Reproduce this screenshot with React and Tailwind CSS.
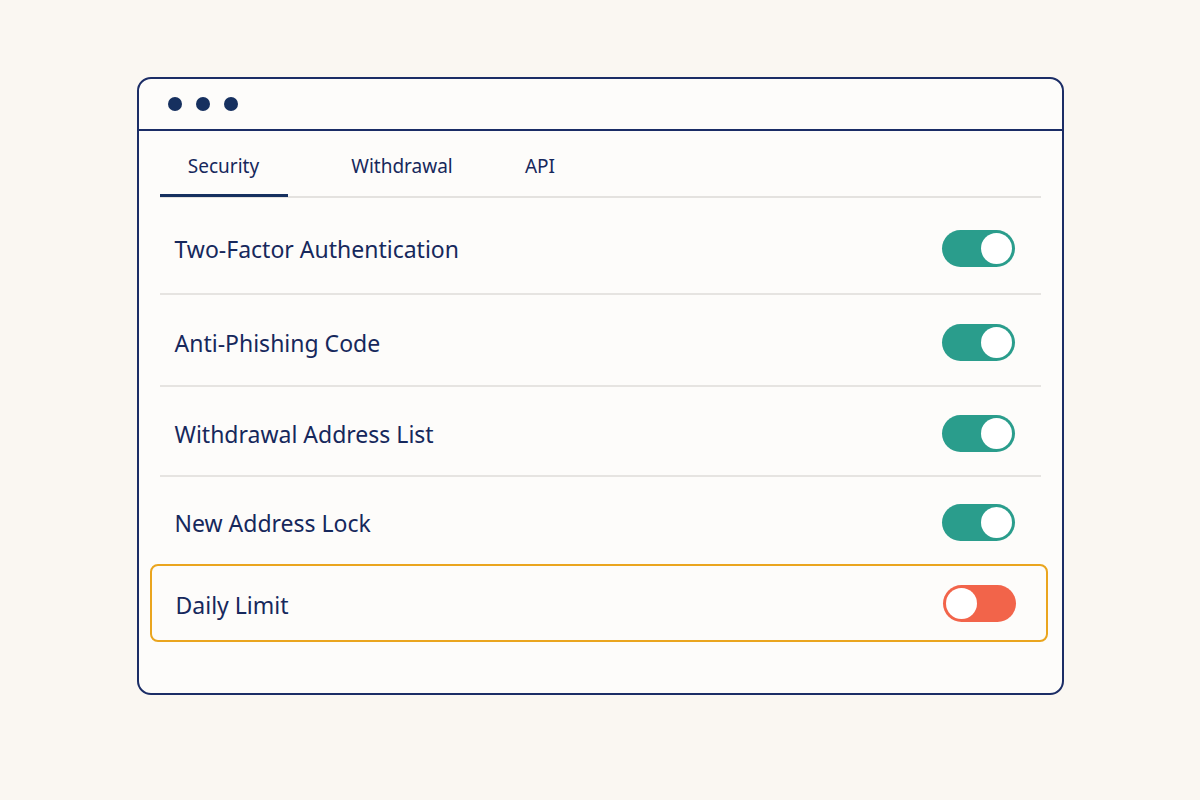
import React, { useState } from 'react';

const tabs = ['Security', 'Withdrawal', 'API'];

const settings = [
  { label: 'Two-Factor Authentication', on: true, height: 'h-[97px]' },
  { label: 'Anti-Phishing Code', on: true, height: 'h-[92px]' },
  { label: 'Withdrawal Address List', on: true, height: 'h-[90px]' },
  { label: 'New Address Lock', on: true, height: 'h-[86px]' },
];

const Toggle = ({ on, onClick }) => (
  <button
    onClick={onClick}
    className={`flex h-[37px] w-[73px] items-center rounded-full p-[3px] ${
      on ? 'justify-end bg-[#2a9d8c]' : 'justify-start bg-[#f2644a]'
    }`}
  >
    <span className="block h-[31px] w-[31px] rounded-full bg-white" />
  </button>
);

export default function App() {
  const [active, setActive] = useState('Security');
  const [values, setValues] = useState(settings.map((s) => s.on));
  const [dailyLimit, setDailyLimit] = useState(false);

  const flip = (i) => setValues((v) => v.map((x, j) => (j === i ? !x : x)));

  return (
    <div
      className="flex h-[800px] w-full items-start justify-center bg-[#faf7f2] pt-[77px] text-[#16285c]"
      style={{ fontFamily: '"Noto Sans", "Open Sans", sans-serif' }}
    >
      <div className="h-[618px] w-[927px] rounded-[14px] border-2 border-[#1b2d66] bg-[#fdfcfa]">
        {/* title bar */}
        <div className="flex h-[52px] items-center gap-[14px] border-b-2 border-[#1b2d66] pl-[29px]">
          <span className="h-[14px] w-[14px] rounded-full bg-[#16305f]" />
          <span className="h-[14px] w-[14px] rounded-full bg-[#16305f]" />
          <span className="h-[14px] w-[14px] rounded-full bg-[#16305f]" />
        </div>

        {/* tabs */}
        <div className="mx-[21px] flex h-[67px] border-b-2 border-[#e4e2df]">
          {tabs.map((t) => (
            <button
              key={t}
              onClick={() => setActive(t)}
              className={`relative flex h-full items-center justify-center pt-[6px] text-[19px] ${
                t === 'Security' ? 'w-[128px]' : t === 'Withdrawal' ? 'w-[227px]' : 'w-[51px]'
              }`}
            >
              <span className={t === 'Withdrawal' ? 'pl-[2px]' : ''}>{t}</span>
              {active === t && (
                <span className="absolute bottom-[-1px] left-0 h-[3px] w-[128px] bg-[#16305f]" />
              )}
            </button>
          ))}
        </div>

        {/* setting rows */}
        <div className="mx-[21px]">
          {settings.map((s, i) => (
            <div
              key={s.label}
              className={`flex items-center justify-between pl-[15px] pr-[26px] pt-[5px] ${s.height} ${
                i < settings.length - 1 ? 'border-b-2 border-[#e6e4e1]' : ''
              }`}
            >
              <span className="pt-[2px] text-[23px]">{s.label}</span>
              <Toggle on={values[i]} onClick={() => flip(i)} />
            </div>
          ))}
        </div>

        <div className="ml-[11px] mr-[14px] mt-[1px] flex h-[78px] items-center justify-between rounded-[8px] border-2 border-[#eaa51e] pl-[24px] pr-[30px]">
          <span className="pt-[4px] text-[23px]">Daily Limit</span>
          <Toggle on={dailyLimit} onClick={() => setDailyLimit(!dailyLimit)} />
        </div>
      </div>
    </div>
  );
}
